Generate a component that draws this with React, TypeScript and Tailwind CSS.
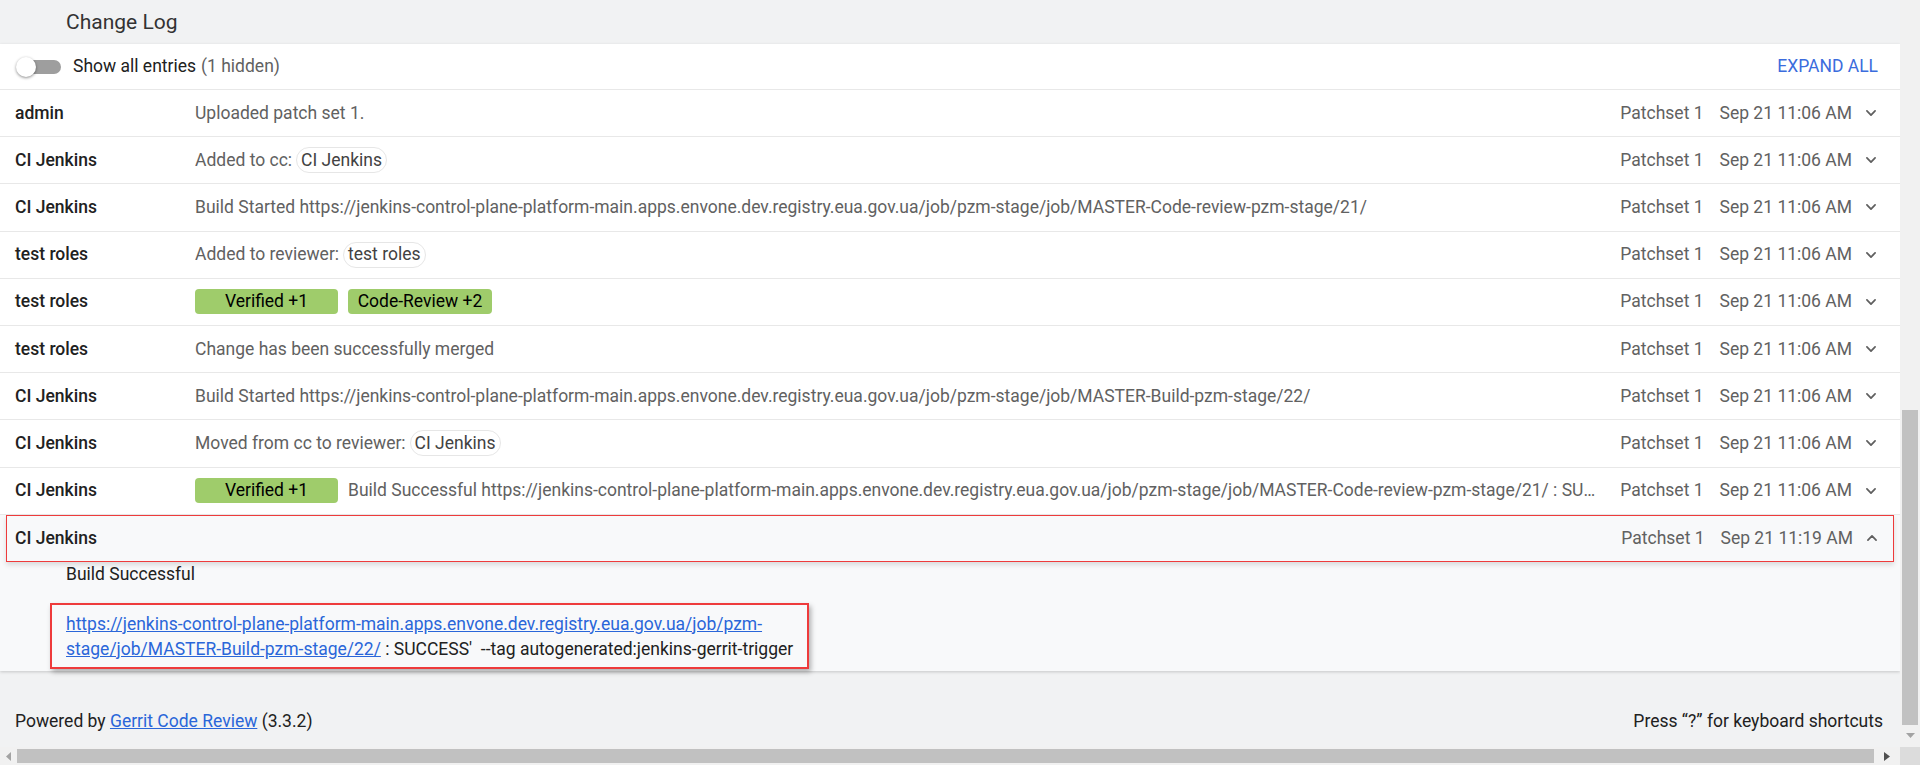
import React from "react";

type Entry = {
  name: string;
  msg: React.ReactNode;
  time: string;
};

const host =
  "https://jenkins-control-plane-platform-main.apps.envone.dev.registry.eua.gov.ua/job/pzm-stage/job/";

function Chip({ children }: { children: React.ReactNode }) {
  return (
    <span className="ml-[4px] inline-flex h-[26px] items-center rounded-full border border-[#e6e6e6] px-[4px] text-[#424242]">
      {children}
    </span>
  );
}

function Vote({ children, w }: { children: React.ReactNode; w: string }) {
  return (
    <span
      className={`inline-flex h-[25px] items-center justify-center rounded-[4px] bg-[#9fcc6b] text-black ${w}`}
    >
      {children}
    </span>
  );
}

function Chevron({ up = false }: { up?: boolean }) {
  return (
    <svg width="14" height="14" viewBox="0 0 24 24" className="shrink-0">
      <path
        d={up ? "M5 15.5l7-7 7 7" : "M5 8.5l7 7 7-7"}
        fill="none"
        stroke="#5f5f5f"
        strokeWidth="3"
        strokeLinecap="round"
        strokeLinejoin="round"
      />
    </svg>
  );
}

const entries: Entry[] = [
  { name: "admin", msg: "Uploaded patch set 1.", time: "Sep 21 11:06 AM" },
  {
    name: "CI Jenkins",
    msg: (
      <>
        Added to cc:<Chip>CI Jenkins</Chip>
      </>
    ),
    time: "Sep 21 11:06 AM",
  },
  {
    name: "CI Jenkins",
    msg: `Build Started ${host}MASTER-Code-review-pzm-stage/21/`,
    time: "Sep 21 11:06 AM",
  },
  {
    name: "test roles",
    msg: (
      <>
        Added to reviewer:<Chip>test roles</Chip>
      </>
    ),
    time: "Sep 21 11:06 AM",
  },
  {
    name: "test roles",
    msg: (
      <span className="flex items-center gap-[10px]">
        <Vote w="w-[143px]">Verified +1</Vote>
        <Vote w="w-[144px]">Code-Review +2</Vote>
      </span>
    ),
    time: "Sep 21 11:06 AM",
  },
  { name: "test roles", msg: "Change has been successfully merged", time: "Sep 21 11:06 AM" },
  {
    name: "CI Jenkins",
    msg: `Build Started ${host}MASTER-Build-pzm-stage/22/`,
    time: "Sep 21 11:06 AM",
  },
  {
    name: "CI Jenkins",
    msg: (
      <>
        Moved from cc to reviewer:<Chip>CI Jenkins</Chip>
      </>
    ),
    time: "Sep 21 11:06 AM",
  },
  {
    name: "CI Jenkins",
    msg: (
      <span className="flex min-w-0 items-center gap-[10px]">
        <Vote w="w-[143px] shrink-0">Verified +1</Vote>
        <span className="min-w-0 truncate">
          Build Successful {host}MASTER-Code-review-pzm-stage/21/ : SUCCESS' --tag
          autogenerated:jenkins-gerrit-trigger
        </span>
      </span>
    ),
    time: "Sep 21 11:06 AM",
  },
];

function Meta({ time, up }: { time: string; up?: boolean }) {
  return (
    <div className="flex shrink-0 items-center text-[#616161]">
      <span>Patchset 1</span>
      <span className="ml-[16px]">{time}</span>
      <span className="ml-[12px]">
        <Chevron up={up} />
      </span>
    </div>
  );
}

function Row({ e }: { e: Entry }) {
  return (
    <div className="flex h-[47.2px] items-center border-b border-[#e8e8e8] pl-[15px] pr-[22px]">
      <div className="w-[180px] shrink-0 font-medium text-[#212121]">{e.name}</div>
      <div className="flex min-w-0 flex-1 items-center overflow-hidden whitespace-nowrap pr-[16px] text-[#616161]">
        {e.msg}
      </div>
      <Meta time={e.time} />
    </div>
  );
}

export default function App() {
  return (
    <div className="flex h-[765px] w-[1920px] flex-col overflow-hidden bg-[#f1f2f3] text-[17.5px] leading-[25px] text-[#212121] [font-family:Roboto,'Liberation_Sans',sans-serif]">
      <div className="flex h-[747px]">
        <main className="flex w-[1900px] flex-col">
          <div className="flex h-[44px] shrink-0 items-center pl-[66px] text-[21px] text-[#333]">
            Change Log
          </div>

          <section className="shrink-0 bg-white shadow-[0_1px_3px_rgba(0,0,0,0.18)]">
            <div className="flex h-[46px] items-center border-b border-[#e8e8e8] pl-[16px] pr-[22px]">
              <div className="relative h-[20px] w-[45px] shrink-0">
                <div className="absolute left-[8px] top-[3px] h-[14px] w-[37px] rounded-full bg-[#9e9e9e]" />
                <div className="absolute left-0 top-0 h-[20px] w-[20px] rounded-full bg-white shadow-[0_1px_3px_rgba(0,0,0,0.45)]" />
              </div>
              <span className="ml-[12px]">Show all entries</span>
              <span className="ml-[5px] text-[#616161]">(1 hidden)</span>
              <span className="ml-auto text-[#3b6cdd]">EXPAND ALL</span>
            </div>

            {entries.map((e, i) => (
              <Row key={i} e={e} />
            ))}

            <div className="bg-[#f8f9fa]">
              <div className="mx-[6px] flex h-[47px] items-center border border-[#ee3b3b] bg-[#f8f9fa] pl-[8px] pr-[14px] shadow-[0_3px_5px_rgba(0,0,0,0.12)]">
                <div className="w-[180px] shrink-0 font-medium">CI Jenkins</div>
                <div className="flex-1" />
                <Meta time="Sep 21 11:19 AM" up />
              </div>
              <div className="pb-[2px] pl-[50px]">
                <p className="pl-[16px]">Build Successful</p>
                <div className="mt-[16px] inline-block border-2 border-[#ee3b3b] pb-[5px] pl-[14px] pr-[14px] pt-[7px] shadow-[2px_3px_5px_rgba(0,0,0,0.3)]">
                  <a className="text-[#2a66d9] underline">
                    https://jenkins-control-plane-platform-main.apps.envone.dev.registry.eua.gov.ua/job/pzm-
                    <br />
                    stage/job/MASTER-Build-pzm-stage/22/
                  </a>
                  <span> : SUCCESS' &nbsp;--tag autogenerated:jenkins-gerrit-trigger</span>
                </div>
              </div>
            </div>
          </section>

          <footer className="flex items-start justify-between pl-[15px] pr-[17px] pt-[38px]">
            <p>
              Powered by{" "}
              <a className="text-[#2a66d9] underline">Gerrit Code Review</a> (3.3.2)
            </p>
            <p>Press “?” for keyboard shortcuts</p>
          </footer>
        </main>

        <div className="flex w-[20px] flex-col bg-[#f1f1f1]">
          <div className="flex-1" />
          <div className="mx-[2px] h-[315px] bg-[#c1c1c1]" />
          <div className="flex h-[22px] items-center justify-center">
            <svg width="9" height="6" viewBox="0 0 9 6">
              <path d="M0 0h9L4.5 5z" fill="#a3a3a3" />
            </svg>
          </div>
        </div>
      </div>

      <div className="flex h-[18px] items-center bg-[#f1f1f1]">
        <div className="flex w-[17px] justify-center">
          <svg width="6" height="9" viewBox="0 0 6 9">
            <path d="M5 0v9L0 4.5z" fill="#a3a3a3" />
          </svg>
        </div>
        <div className="h-[14px] w-[1857px] bg-[#c1c1c1]" />
        <div className="flex flex-1 justify-center">
          <svg width="6" height="9" viewBox="0 0 6 9">
            <path d="M0 0v9L6 4.5z" fill="#505050" />
          </svg>
        </div>
        <div className="h-full w-[20px] bg-[#dcdcdc]" />
      </div>
    </div>
  );
}
